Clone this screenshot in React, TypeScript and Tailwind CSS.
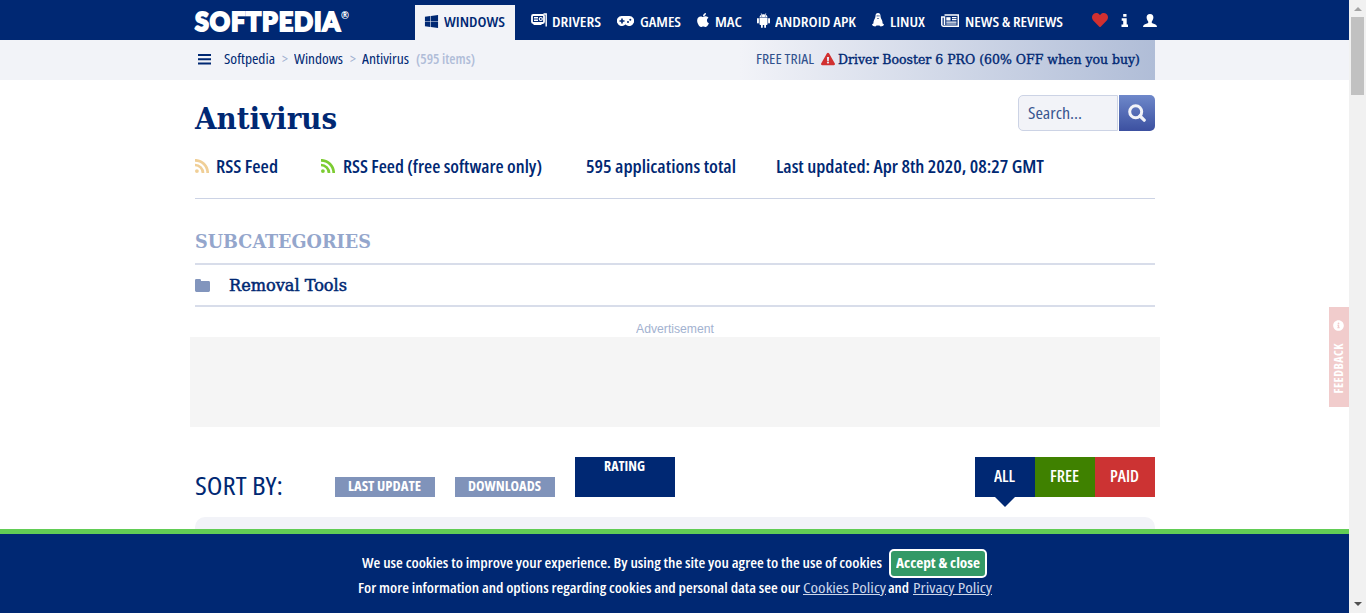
import { useLayoutEffect, useRef, type ReactNode } from "react";
import { FaWindows, FaApple, FaHeart, FaExclamationTriangle, FaInfoCircle } from "react-icons/fa";

/** Single line of text condensed or expanded to an exact width in pixels. */
function Fit({ w, className = "", inner = "", children }: { w: number; className?: string; inner?: string; children: ReactNode }) {
  const ref = useRef<HTMLSpanElement>(null);
  useLayoutEffect(() => {
    const el = ref.current;
    if (el && el.offsetWidth) {
      el.style.transform = "none";
      el.style.transform = `scaleX(${w / el.getBoundingClientRect().width})`;
    }
  }, [w]);
  return (
    <span className={`block shrink-0 whitespace-nowrap ${className}`} style={{ width: w }}>
      <span ref={ref} className={`inline-block origin-left align-top ${inner}`}>{children}</span>
    </span>
  );
}

const SLAB = "font-['DejaVu_Serif',serif]";

function DriversIcon() {
  return (
    <svg viewBox="0 0 16 14" className="block h-[14px] w-[16px]" fill="none" stroke="currentColor">
      <rect x="1" y="2" width="12" height="8" rx="1.200" strokeWidth="1.800" />
      <path d="M3 4.700h4M3 7.300h4M12.500 1H15.200V13.500M2.500 11.300h8" strokeWidth="1.400" />
      <circle cx="9.800" cy="6" r="1.500" strokeWidth="1.200" />
    </svg>
  );
}

function GamepadIcon() {
  return (
    <svg viewBox="0 0 17 10" className="mt-[2px] block h-[10px] w-[17px]">
      <path fill="currentColor" fillRule="evenodd" d="M5 0h7a5 5 0 1 1-3.400 8.500h-.2A5 5 0 1 1 5 0ZM4.200 2.500v1.700H2.500v1.600h1.700v1.700h1.600V5.800h1.700V4.200H5.800V2.500ZM11 5a1 1 0 1 0 0 2 1 1 0 0 0 0-2Zm2.300-2.200a1 1 0 1 0 0 2 1 1 0 0 0 0-2Z" />
    </svg>
  );
}

function AndroidIcon() {
  return (
    <svg viewBox="0 0 13 15" className="mt-px block h-[15px] w-[13px]" fill="currentColor">
      <path fillRule="evenodd" d="M2.500 4.600C2.600 3.200 3.400 2.200 4.400 1.600L3.700.3 4.100 0 4.900 1.400a5 5 0 0 1 3.200 0L8.900 0l.4.300-.7 1.300c1 .6 1.800 1.600 1.900 3ZM4.700 2.600a.5.5 0 1 0 0 1 .5.5 0 0 0 0-1Zm3.600 0a.5.5 0 1 0 0 1 .5.5 0 0 0 0-1Z" />
      <path d="M2.500 5.100h8v6q0 1-1 1H9V14a.9.9 0 0 1-1.800 0v-1.900H5.800V14A.9.9 0 0 1 4 14v-1.900h-.5q-1 0-1-1Z" />
      <rect x="0" y="5" width="1.900" height="5.500" rx=".95" />
      <rect x="11.100" y="5" width="1.900" height="5.500" rx=".95" />
    </svg>
  );
}

function LinuxIcon() {
  return (
    <svg viewBox="0 0 12 14" className="block h-[14px] w-[12px]">
      <path fill="currentColor" d="M6 0c1.700 0 2.500 1.200 2.500 2.800 0 2 .7 2.600 1.400 4.200.6 1.300.7 2.300.6 3.200.8.500 1.500 1.200 1.500 1.600 0 .7-2.200 1.800-3.200 1.800-.7 0-1-.8-1.400-1H4.600c-.4.200-.7 1-1.400 1C2.200 13.600 0 12.500 0 11.800c0-.4.700-1.100 1.500-1.600-.1-.9 0-1.900.6-3.200.7-1.600 1.400-2.200 1.400-4.200C3.500 1.200 4.300 0 6 0Z" />
      <path fill="#002873" d="M4.700 2.300h.9v1.100h-.9ZM6.500 2.300h.9v1.100h-.9ZM4.800 5h2.400L6 6Z" />
    </svg>
  );
}

function NewsIcon() {
  return (
    <svg viewBox="0 0 18 14" className="mt-px block h-[14px] w-[18px]" fill="none" stroke="currentColor">
      <path d="M3.500 1h13.800v11.200H2.200A1.500 1.500 0 0 1 .8 10.800V3h2.700V11" strokeWidth="1.500" />
      <path d="M11 3.600h4.500M11 5.700h4.500M5.300 8.100h10.200M5.300 10h10.200" strokeWidth="1.200" />
      <rect x="5.300" y="3.200" width="4.200" height="3.300" fill="currentColor" stroke="none" />
    </svg>
  );
}

function InfoIcon() {
  return (
    <svg viewBox="0 0 8 13" className="block h-[13px] w-[8px]" fill="currentColor">
      <path d="M2.200 0h3.300v2.800H2.200ZM.7 4.300h5v6.300H7V13H.5v-2.400h1.700V6.700H.7Z" />
    </svg>
  );
}

function UserIcon() {
  return (
    <svg viewBox="0 0 14 13" className="block h-[13px] w-[14px]" fill="currentColor">
      <path d="M7 0C9.300 0 10.600 1.500 10.400 3.600 10.300 5.500 9.500 6.700 8.800 7.500V9L12.500 10.500Q14 11 14 13H0Q0 11 1.500 10.500L5.200 9V7.500C4.500 6.700 3.700 5.500 3.600 3.600 3.400 1.500 4.700 0 7 0Z" />
    </svg>
  );
}

function RssIcon({ className }: { className: string }) {
  return (
    <svg viewBox="0 0 14 14" className={`h-[14px] w-[14px] shrink-0 ${className}`} fill="none" stroke="currentColor" strokeWidth="2.700">
      <path d="M0 1.300A12.700 12.700 0 0 1 12.700 14M0 6A8 8 0 0 1 8 14" />
      <circle cx="1.900" cy="12.100" r="1.900" fill="currentColor" stroke="none" />
    </svg>
  );
}

const navItems = [
  { label: "DRIVERS", w: 49, gap: "ml-[16px]", box: "w-[21px]", icon: <DriversIcon /> },
  { label: "GAMES", w: 41, gap: "ml-[16px]", box: "w-[23px]", icon: <GamepadIcon /> },
  { label: "MAC", w: 27, gap: "ml-[15px]", box: "w-[19px]", icon: <FaApple className="h-[16px] w-[14px]" /> },
  { label: "ANDROID APK", w: 81, gap: "ml-[15px]", box: "w-[18px]", icon: <AndroidIcon /> },
  { label: "LINUX", w: 35, gap: "ml-[16px]", box: "w-[18px]", icon: <LinuxIcon /> },
  { label: "NEWS & REVIEWS", w: 98, gap: "ml-[16px]", box: "w-[24px]", icon: <NewsIcon /> },
];

function Header() {
  return (
    <header className="flex h-[40px] shrink-0 bg-[#002873] pl-[195px] text-white">
      <div className="flex w-[220px] pt-[5px]">
        <Fit w={146} className="font-[Lato,sans-serif] text-[26.500px] leading-[32px] font-black [-webkit-text-stroke:2px_white]" inner="tracking-[1px]">SOFTPEDIA</Fit>
        <Fit w={8} className="text-[10px] leading-[20px] font-bold">®</Fit>
      </div>
      <nav className="flex h-[40px] text-[15px] leading-[20px] font-semibold">
        <a className="mt-[5px] flex h-[35px] w-[100px] items-center bg-[#f2f3f8] pb-[3px] pl-[9px] text-[#002873]">
          <FaWindows className="mr-[5px] h-[15px] w-[15px]" />
          <Fit w={61}>WINDOWS</Fit>
        </a>
        {navItems.map((item) => (
          <a key={item.label} className={`flex h-[40px] items-center pt-[2px] ${item.gap}`}>
            <span className={`pb-[2px] ${item.box}`}>{item.icon}</span>
            <Fit w={item.w}>{item.label}</Fit>
          </a>
        ))}
      </nav>
      <div className="ml-[29px] flex h-[40px] items-center">
        <FaHeart className="h-[16px] w-[16px] text-[#d13030]" />
        <span className="ml-[13px]"><InfoIcon /></span>
        <span className="ml-[14px]"><UserIcon /></span>
      </div>
    </header>
  );
}

function Breadcrumb() {
  return (
    <div className="flex h-[40px] shrink-0 bg-[#f2f3f8] pl-[198px] text-[14px] leading-[38px]">
      <svg viewBox="0 0 13 11" className="mt-[14px] mr-[13px] h-[11px] w-[13px] fill-[#002873]">
        <path d="M0 0h13v2H0zM0 4.200h13v2H0zM0 8.400h13v2H0z" />
      </svg>
      <Fit w={51}>Softpedia</Fit>
      <Fit w={6} className="mx-[7px] text-[#9fb0d0]">&gt;</Fit>
      <Fit w={49} className="ml-[-1px]">Windows</Fit>
      <Fit w={6} className="mx-[7px] text-[#9fb0d0]">&gt;</Fit>
      <Fit w={47} className="ml-[-1px]">Antivirus</Fit>
      <Fit w={59} className="ml-[7px] font-semibold text-[#b0bdd8]">(595 items)</Fit>
      <div className="ml-[265px] flex w-[415px] bg-linear-to-r from-[#f2f3f8] to-[#b0bdd7] pl-[16px]">
        <Fit w={58} className="text-[#31518d]">FREE TRIAL</Fit>
        <FaExclamationTriangle className="mt-[12px] mr-[3px] ml-[7px] h-[14px] w-[14px] text-[#d13030]" />
        <Fit w={302} className={`${SLAB} pt-px text-[13px] [-webkit-text-stroke:0.350px_#002873]`}>Driver Booster 6 PRO (60% OFF when you buy)</Fit>
      </div>
    </div>
  );
}

function Content() {
  return (
    <main className="flex min-h-0 flex-1 flex-col overflow-hidden pl-[195px]">
      <div className="flex h-[66px] w-[960px] shrink-0 justify-between">
        <h1 className="pt-[19px]"><Fit w={142} className={`${SLAB} text-[30px] leading-[40px] font-bold`}>Antivirus</Fit></h1>
        <div className="flex pt-[15px]">
          <div className="mr-px h-[36px] w-[100px] rounded-l-[5px] border border-[#ccd3e5] bg-[#f2f3f8] pl-[9px] text-[16px] leading-[34px] text-[#395690]">
            <Fit w={54}>Search...</Fit>
          </div>
          <button className="flex h-[36px] w-[36px] items-center justify-center rounded-r-[5px] bg-linear-to-b from-[#6f88ca] to-[#3c50a0] text-[#f2f3f8]">
            <svg viewBox="0 0 18 18" className="h-[18px] w-[18px]" fill="none" stroke="currentColor">
              <circle cx="7.700" cy="7.700" r="6" strokeWidth="3" />
              <path d="M12 12l4.200 4.200" strokeWidth="3.200" strokeLinecap="round" />
            </svg>
          </button>
        </div>
      </div>
      <div className="flex h-[53px] w-[960px] shrink-0 border-b border-[#ccd3e5] pt-[9px] text-[17px] leading-[24px] font-semibold">
        <RssIcon className="mt-[4px] mr-[7px] text-[#f0cf97]" />
        <Fit w={62}>RSS Feed</Fit>
        <RssIcon className="mt-[4px] mr-[7px] ml-[43px] text-[#7ccc32]" />
        <Fit w={199} className="ml-px">RSS Feed (free software only)</Fit>
        <Fit w={150} className="ml-[44px]">595 applications total</Fit>
        <Fit w={268} className="ml-[40px]">Last updated: Apr 8th 2020, 08:27 GMT</Fit>
      </div>
      <h2 className="h-[66px] w-[960px] shrink-0 border-b-2 border-[#d8ddea] pt-[29px] text-[#94a6cc]">
        <Fit w={176} className={`${SLAB} text-[19px] leading-[26px] font-bold`}>SUBCATEGORIES</Fit>
      </h2>
      <div className="flex h-[42px] w-[960px] shrink-0 items-center border-b-2 border-[#d8ddea]">
        <svg viewBox="0 0 15 13" className="mr-[19px] h-[13px] w-[15px] fill-[#8295bd]">
          <path d="M1.300 0h3.400Q6 0 6 1.300V2h7.600Q15 2 15 3.400v8.200Q15 13 13.600 13H1.400Q0 13 0 11.600V1.300Q0 0 1.300 0Z" />
        </svg>
        <Fit w={118} className={`${SLAB} pt-px text-[16px] leading-[24px] [-webkit-text-stroke:0.450px_#002873]`}>Removal Tools</Fit>
      </div>
      <div className="flex h-[30px] w-[960px] shrink-0 justify-center pt-[14px]">
        <Fit w={78} className="font-['Liberation_Sans',sans-serif] text-[12px] leading-[16px] text-[#a3b2d0]">Advertisement</Fit>
      </div>
      <div className="-ml-[5px] h-[90px] w-[970px] shrink-0 bg-[#f5f5f5]" />
      <div className="mt-[30px] flex h-[40px] w-[960px] shrink-0 items-end">
        <Fit w={88} className="mr-[52px] text-[25px] leading-[24px]">SORT BY:</Fit>
        <div className="mr-[20px] flex h-[20px] w-[100px] justify-center bg-[#8093ba] pr-px text-[13.500px] leading-[19px] font-bold text-white"><Fit w={73}>LAST UPDATE</Fit></div>
        <div className="mr-[20px] flex h-[20px] w-[100px] justify-center bg-[#8093ba] pr-px text-[13.500px] leading-[19px] font-bold text-white"><Fit w={73}>DOWNLOADS</Fit></div>
        <div className="flex h-[40px] w-[100px] justify-center bg-[#002873] pr-px text-[13.500px] leading-[19px] font-bold text-white"><Fit w={41}>RATING</Fit></div>
        <div className="ml-auto flex text-[16px] leading-[39px] font-semibold text-white">
          <div className="relative flex h-[40px] w-[60px] justify-center bg-[#002873] pr-[2px]">
            <Fit w={21}>ALL</Fit>
            <span className="absolute top-[40px] left-[20px] border-x-[10px] border-t-[10px] border-x-transparent border-t-[#002873]" />
          </div>
          <div className="flex h-[40px] w-[60px] justify-center bg-[#3f8100] pr-[2px]"><Fit w={29}>FREE</Fit></div>
          <div className="flex h-[40px] w-[60px] justify-center bg-[#cc3333] pr-[2px]"><Fit w={29}>PAID</Fit></div>
        </div>
      </div>
      <div className="mt-[20px] h-[60px] w-[960px] shrink-0 rounded-[10px] bg-[#f2f3f8]" />
    </main>
  );
}

function CookieBar() {
  return (
    <footer className="h-[84px] shrink-0 border-t-[5px] border-[#62cd55] bg-[#002873] pt-[15px] text-[14px] font-semibold text-white">
      <div className="flex h-[29px] pl-[362px] leading-[28px]">
        <Fit w={520}>We use cookies to improve your experience. By using the site you agree to the use of cookies</Fit>
        <button className="ml-[7px] h-[29px] w-[98px] rounded-[5px] border-2 border-white bg-[#339966] pb-[2px] pl-[5px] text-left leading-[23px] font-bold"><Fit w={84}>Accept &amp; close</Fit></button>
      </div>
      <div className="flex pl-[358px] leading-[20px]">
        <Fit w={442}>For more information and options regarding cookies and personal data see our</Fit>
        <Fit w={83} className="ml-[3px] font-medium text-[#ccd6ea]" inner="underline">Cookies Policy</Fit>
        <Fit w={21} className="ml-[2px]">and</Fit>
        <Fit w={79} className="ml-[4px] font-medium text-[#ccd6ea]" inner="underline">Privacy Policy</Fit>
      </div>
    </footer>
  );
}

function Scrollbar() {
  return (
    <div className="flex h-[613px] w-[17px] shrink-0 flex-col items-center bg-[#f1f1f1]">
      <span className="mt-[7px] border-x-[4px] border-b-[4px] border-x-transparent border-b-[#a3a3a3]" />
      <div className="mt-[6px] h-[78px] w-[13px] bg-[#c1c1c1]" />
      <span className="mt-auto mb-[7px] border-x-[4px] border-t-[4px] border-x-transparent border-t-[#505050]" />
    </div>
  );
}

export default function App() {
  return (
    <div className="relative flex h-[613px] w-[1366px] overflow-hidden bg-white font-['Open_Sans',sans-serif] text-[#002873] [font-stretch:75%]">
      <div className="flex w-[1349px] shrink-0 flex-col">
        <Header />
        <Breadcrumb />
        <Content />
        <CookieBar />
      </div>
      <Scrollbar />
      <div className="absolute top-[307px] left-[1329px] flex h-[100px] w-[20px] flex-col items-center bg-[#f1cccc] pt-[13px] pr-px text-white">
        <FaInfoCircle className="h-[11px] w-[11px]" />
        <span className="mt-[12px] rotate-180 text-[12px] leading-[20px] font-bold tracking-[0.500px] [writing-mode:vertical-rl]">FEEDBACK</span>
      </div>
    </div>
  );
}
